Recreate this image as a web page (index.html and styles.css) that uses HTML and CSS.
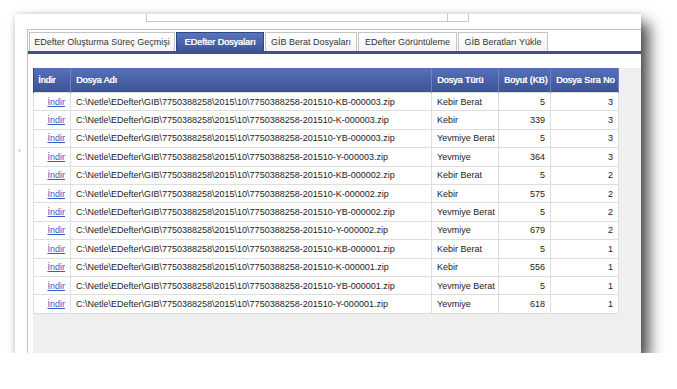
FILE: index.html
```html
<!DOCTYPE html>
<html lang="tr">
<head>
    <meta charset="UTF-8">
    <meta name="viewport" content="width=device-width, initial-scale=1.0">
    <title>EDefter Dosyaları</title>
    <link rel="stylesheet" href="styles.css">
</head>
<body>
    <div class="window">
        <div class="topbar">
            <div class="path-box">
                <div class="path-field"></div>
                <div class="path-button"></div>
            </div>
        </div>
        <span class="splitter-mark">&lsaquo;</span>
        <div class="tab-panel">
            <div class="tab-strip">
                <a class="tab tab-first">EDefter Oluşturma Süreç Geçmişi</a>
                <a class="tab active">EDefter Dosyaları</a>
                <a class="tab">GİB Berat Dosyaları</a>
                <a class="tab">EDefter Görüntüleme</a>
                <a class="tab">GİB Beratları Yükle</a>
            </div>
            <div class="tab-bar"></div>
            <div class="tab-body">
                <div class="grid-wrap">
                    <table class="grid">
                        <colgroup>
                            <col class="c-link">
                            <col class="c-name">
                            <col class="c-type">
                            <col class="c-size">
                            <col class="c-seq">
                        </colgroup>
                        <thead>
                            <tr>
                                <th>İndir</th>
                                <th>Dosya Adı</th>
                                <th>Dosya Türü</th>
                                <th>Boyut (KB)</th>
                                <th>Dosya Sıra No</th>
                            </tr>
                        </thead>
                        <tbody>
                            <tr><td class="num"><a href="#">İndir</a></td><td>C:\Netle\EDefter\GIB\7750388258\2015\10\7750388258-201510-KB-000003.zip</td><td>Kebir Berat</td><td class="num">5</td><td class="num">3</td></tr>
                            <tr><td class="num"><a href="#">İndir</a></td><td>C:\Netle\EDefter\GIB\7750388258\2015\10\7750388258-201510-K-000003.zip</td><td>Kebir</td><td class="num">339</td><td class="num">3</td></tr>
                            <tr><td class="num"><a href="#">İndir</a></td><td>C:\Netle\EDefter\GIB\7750388258\2015\10\7750388258-201510-YB-000003.zip</td><td>Yevmiye Berat</td><td class="num">5</td><td class="num">3</td></tr>
                            <tr><td class="num"><a href="#">İndir</a></td><td>C:\Netle\EDefter\GIB\7750388258\2015\10\7750388258-201510-Y-000003.zip</td><td>Yevmiye</td><td class="num">364</td><td class="num">3</td></tr>
                            <tr><td class="num"><a href="#">İndir</a></td><td>C:\Netle\EDefter\GIB\7750388258\2015\10\7750388258-201510-KB-000002.zip</td><td>Kebir Berat</td><td class="num">5</td><td class="num">2</td></tr>
                            <tr><td class="num"><a href="#">İndir</a></td><td>C:\Netle\EDefter\GIB\7750388258\2015\10\7750388258-201510-K-000002.zip</td><td>Kebir</td><td class="num">575</td><td class="num">2</td></tr>
                            <tr><td class="num"><a href="#">İndir</a></td><td>C:\Netle\EDefter\GIB\7750388258\2015\10\7750388258-201510-YB-000002.zip</td><td>Yevmiye Berat</td><td class="num">5</td><td class="num">2</td></tr>
                            <tr><td class="num"><a href="#">İndir</a></td><td>C:\Netle\EDefter\GIB\7750388258\2015\10\7750388258-201510-Y-000002.zip</td><td>Yevmiye</td><td class="num">679</td><td class="num">2</td></tr>
                            <tr><td class="num"><a href="#">İndir</a></td><td>C:\Netle\EDefter\GIB\7750388258\2015\10\7750388258-201510-KB-000001.zip</td><td>Kebir Berat</td><td class="num">5</td><td class="num">1</td></tr>
                            <tr><td class="num"><a href="#">İndir</a></td><td>C:\Netle\EDefter\GIB\7750388258\2015\10\7750388258-201510-K-000001.zip</td><td>Kebir</td><td class="num">556</td><td class="num">1</td></tr>
                            <tr><td class="num"><a href="#">İndir</a></td><td>C:\Netle\EDefter\GIB\7750388258\2015\10\7750388258-201510-YB-000001.zip</td><td>Yevmiye Berat</td><td class="num">5</td><td class="num">1</td></tr>
                            <tr><td class="num"><a href="#">İndir</a></td><td>C:\Netle\EDefter\GIB\7750388258\2015\10\7750388258-201510-Y-000001.zip</td><td>Yevmiye</td><td class="num">618</td><td class="num">1</td></tr>
                        </tbody>
                    </table>
                </div>
            </div>
        </div>
    </div>
</body>
</html>
```

FILE: styles.css
```css
body {
    margin: 0;
    background: #ffffff;
    font-family: "Liberation Sans", Arial, sans-serif;
    font-size: 9px;
    color: #222;
}

.window {
    position: relative;
    margin: 14px 0 0 15px;
    width: 626px;
    height: 339px;
    background: #ffffff;
    display: flex;
    flex-direction: column;
    box-shadow: 8px 9px 14px rgba(0, 0, 0, 0.7), 0 0 5px rgba(0, 0, 0, 0.15);
}

/* Top path field, cut off by the window edge */
.topbar {
    height: 15px;
    padding-left: 131px;
}

.path-box {
    display: flex;
    width: 323px;
    height: 8px;
}

.path-field {
    flex: 1;
    border: 1px solid #c9c9c9;
    border-top: none;
}

.path-button {
    width: 20px;
    border: 1px solid #c9c9c9;
    border-top: none;
    border-left: none;
}

.splitter-mark {
    position: absolute;
    left: 3px;
    top: 132px;
    font-size: 8px;
    color: #999;
}

/* Tabs */
.tab-panel {
    flex: 1;
    margin-left: 12px;
    border-top: 1px solid #aec4e4;
    border-left: 1px solid #aec4e4;
    display: flex;
    flex-direction: column;
}

.tab-strip {
    display: flex;
    gap: 1px;
    padding: 2px 0 0 1px;
    height: 19px;
}

.tab {
    display: flex;
    align-items: center;
    justify-content: center;
    height: 19px;
    box-sizing: border-box;
    border: 1px solid #c4c4c4;
    border-bottom: none;
    background: linear-gradient(#ffffff, #f4f4f4);
    color: #333;
    white-space: nowrap;
}

.tab:nth-child(1) { width: 146px; }
.tab:nth-child(2) { width: 88px; }
.tab:nth-child(3) { width: 92px; }
.tab:nth-child(4) { width: 99px; }
.tab:nth-child(5) { width: 90px; }

.tab.active {
    background: linear-gradient(#5a74bb, #3d5499);
    border-color: #2f4586;
    color: #ffffff;
    text-shadow: 0.4px 0 0 #ffffff;
}

.tab-bar {
    height: 3px;
    background: #3b5195;
}

.tab-body {
    flex: 1;
    display: flex;
    padding: 14px 0 0 5px;
}

/* Grid */
.grid-wrap {
    flex: 1;
    background: #efefef;
}

.grid {
    border-collapse: collapse;
    table-layout: fixed;
    width: 585px;
    background: #ffffff;
}

.c-link { width: 37px; }
.c-name { width: 361px; }
.c-type { width: 67px; }
.c-size { width: 52px; }
.c-seq { width: 68px; }

.grid th {
    height: 24px;
    padding: 0 5px;
    text-align: left;
    font-weight: normal;
    color: #ffffff;
    text-shadow: 0.4px 0 0 #ffffff;
    background: linear-gradient(#5670b7, #3c5297);
    border-left: 1px solid #2f4586;
    border-right: 1px solid #6d84c2;
    white-space: nowrap;
}

.grid th:first-child {
    padding-left: 4px;
}

.grid tbody tr {
    height: 18.4px;
}

.grid td {
    padding: 0 5px;
    border: 1px solid #dedede;
    white-space: nowrap;
    overflow: hidden;
}

.grid td.num {
    text-align: right;
}

.grid a {
    color: #3a5bc7;
    text-decoration: underline;
}
```
